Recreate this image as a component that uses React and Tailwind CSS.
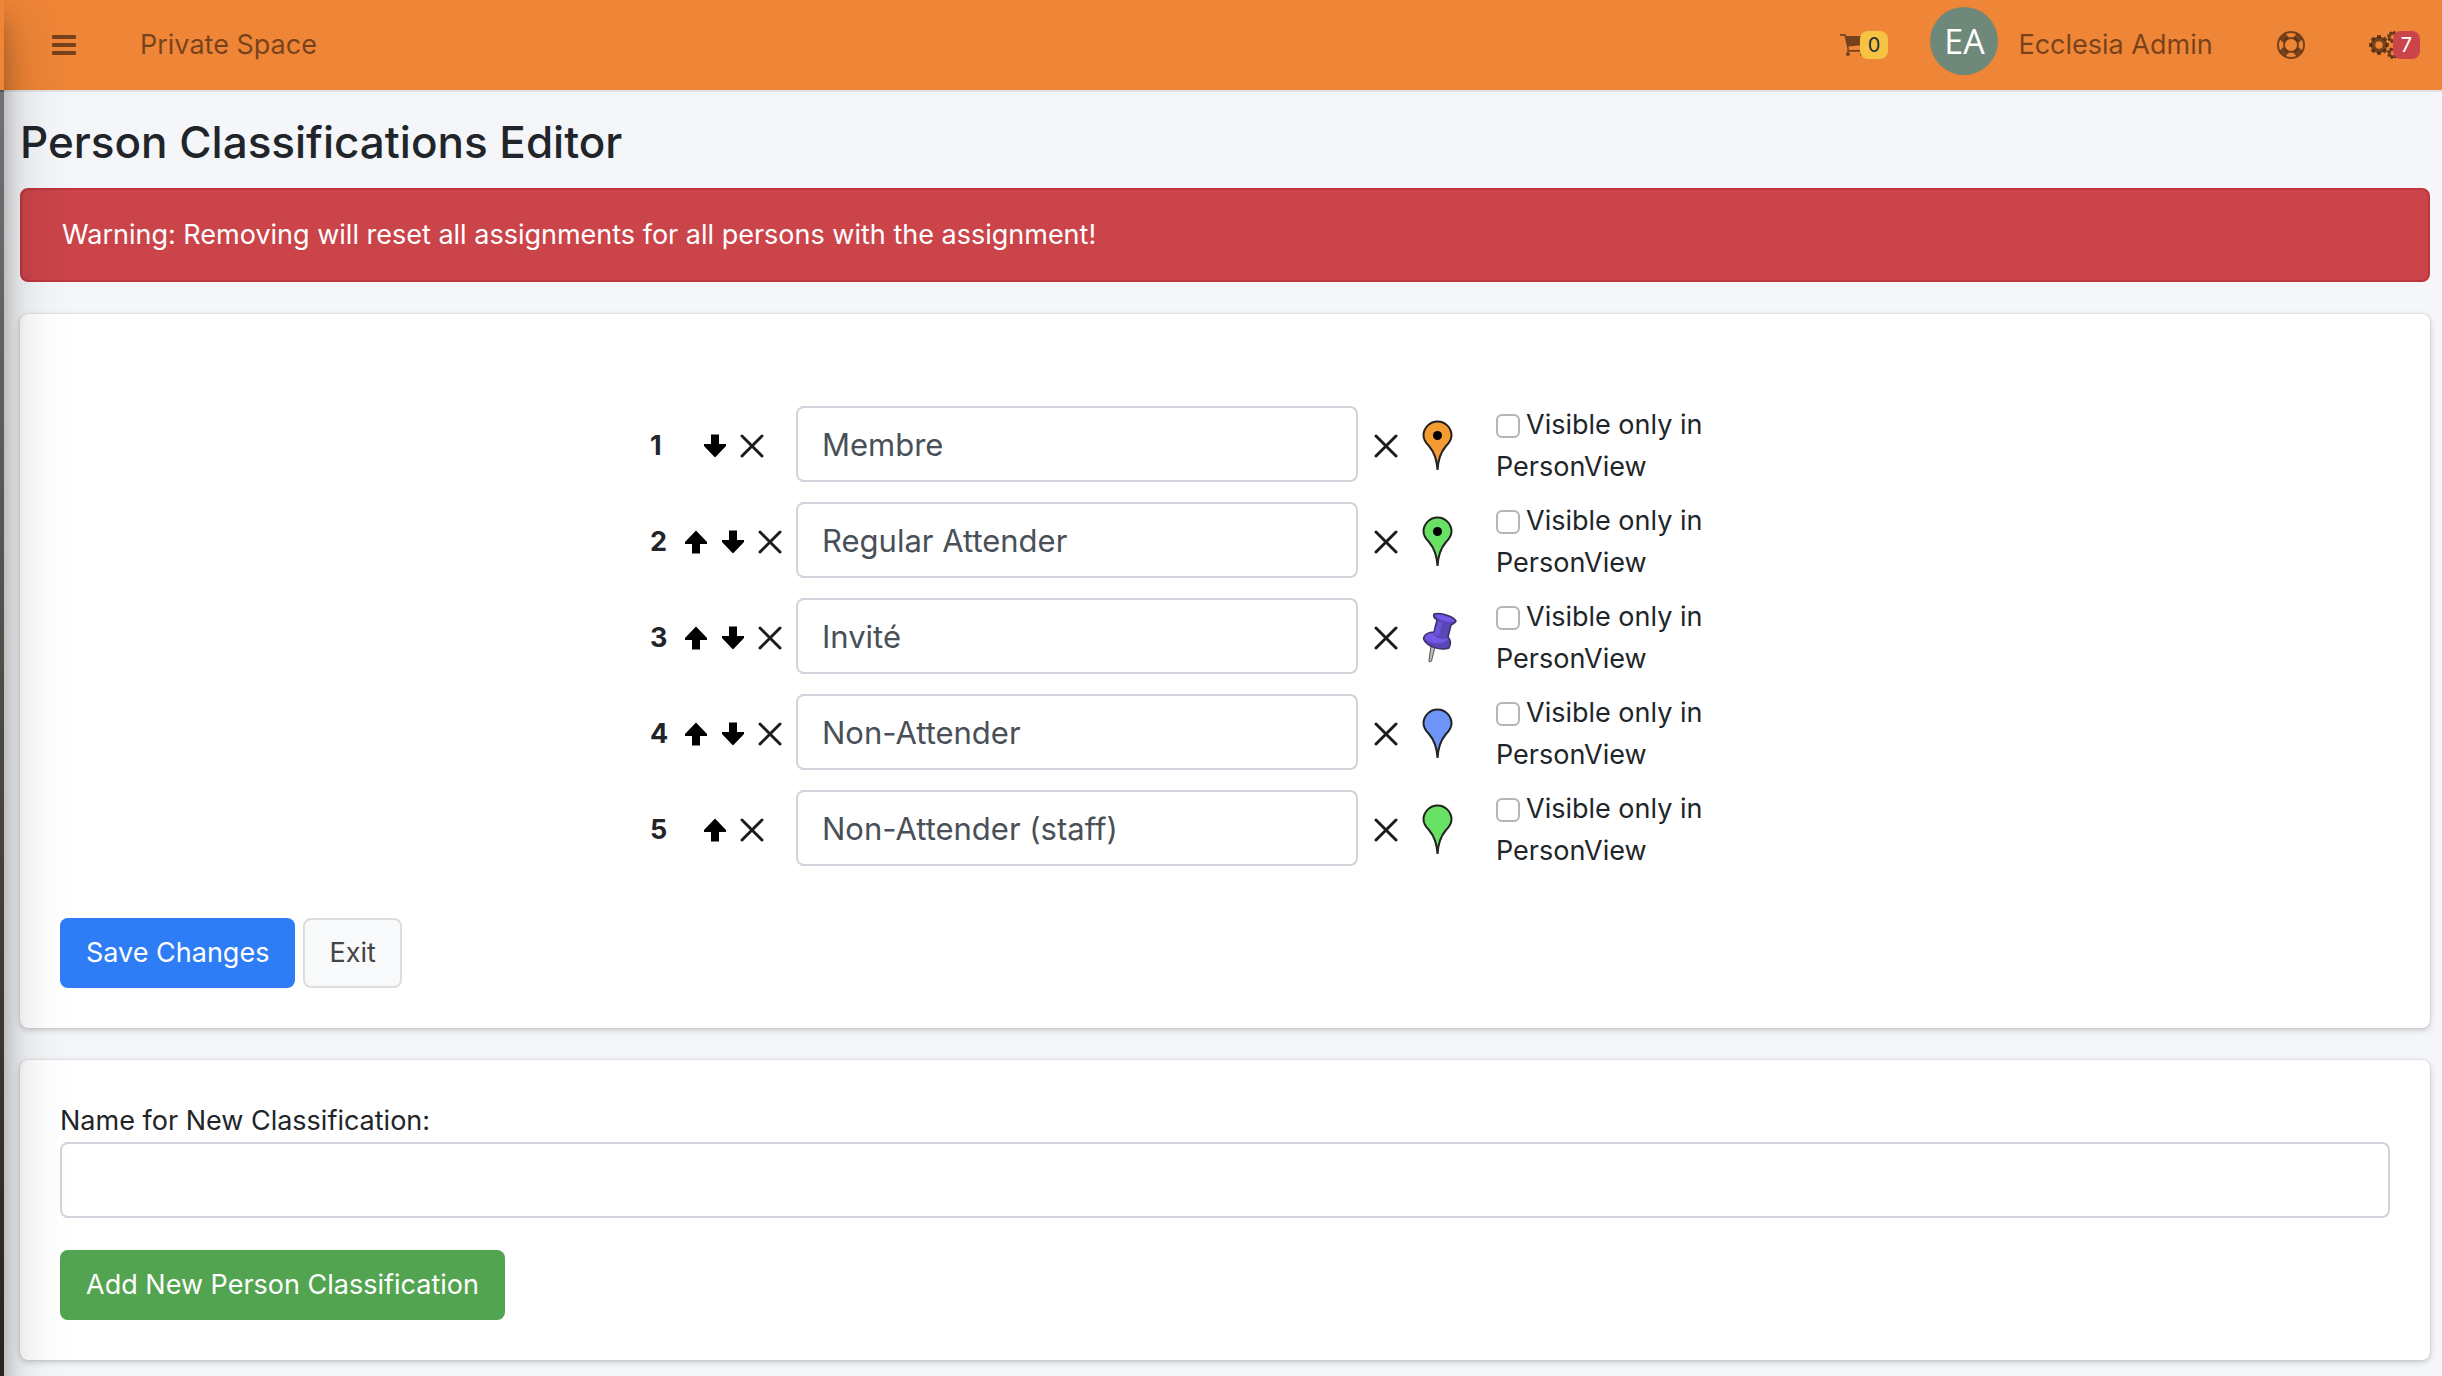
import { useState } from 'react';

const initialRows = [
  { id: 1, name: 'Membre', marker: 'orange', dot: true },
  { id: 2, name: 'Regular Attender', marker: 'green', dot: true },
  { id: 3, name: 'Invité', marker: 'pushpin' },
  { id: 4, name: 'Non-Attender', marker: 'blue' },
  { id: 5, name: 'Non-Attender (staff)', marker: 'green' }
];

const markerColors = { orange: '#f59b34', green: '#68e264', blue: '#6d95f7' };

function BarsIcon() {
  return (
    <svg viewBox="0 0 24 20" fill="currentColor" className="w-6 h-5">
      <rect width="24" height="4" rx="1" />
      <rect y="8" width="24" height="4" rx="1" />
      <rect y="16" width="24" height="4" rx="1" />
    </svg>
  );
}

function CartIcon() {
  return (
    <svg viewBox="0 0 28 22" fill="currentColor" className="w-7 h-[22px]">
      <path d="M0 0 H5.500 L6.200 2 H27 V10.500 L8.500 12.500 L9 16 H25 V17.800 H7 L7.500 15 L4.500 1.800 H0 Z" />
      <circle cx="8" cy="20" r="2" />
      <circle cx="22" cy="20" r="2" />
    </svg>
  );
}

function LifeRingIcon() {
  return (
    <svg viewBox="0 0 28 28" fill="none" stroke="currentColor" className="w-7 h-7">
      <circle cx="14" cy="14" r="13" strokeWidth="2" />
      <circle cx="14" cy="14" r="7" strokeWidth="2" />
      <path d="M5.500 5.500 L9 9 M22.500 5.500 L19 9 M5.500 22.500 L9 19 M22.500 22.500 L19 19" strokeWidth="8" />
    </svg>
  );
}

function Gear({ x, y, scale, turn }) {
  return (
    <g transform={`translate(${x} ${y}) rotate(${turn}) scale(${scale})`}>
      <circle r="6" strokeWidth="4.500" />
      {[0, 45, 90, 135].map(a => (
        <path key={a} d="M-10 0 H-7 M7 0 H10" strokeWidth="4" transform={`rotate(${a})`} />
      ))}
    </g>
  );
}

function GearsIcon() {
  return (
    <svg viewBox="0 0 32 28" fill="none" stroke="currentColor" className="w-8 h-7">
      <Gear x={10} y={14} scale={1} turn={0} />
      <Gear x={24} y={6} scale={0.6} turn={15} />
      <Gear x={24} y={22} scale={0.6} turn={15} />
    </svg>
  );
}

function ArrowIcon({ down }) {
  return (
    <svg viewBox="0 0 24 24" className={down ? 'w-6 h-6 rotate-180' : 'w-6 h-6'}>
      <path d="M12 0.5 L23 12 V14 H16 V23.5 H8 V14 H1 V12 Z" fill="#000" />
    </svg>
  );
}

function CrossIcon() {
  return (
    <svg viewBox="0 0 24 24" className="w-6 h-6">
      <path d="M2 2 L22 22 M22 2 L2 22" stroke="#1c1c1c" strokeWidth="3" strokeLinecap="round" fill="none" />
    </svg>
  );
}

function MarkerIcon({ marker, dot }) {
  if (marker === 'pushpin') {
    return (
      <svg viewBox="0 0 36 52" className="w-9 h-[52px]">
        <path d="M9 34 L13 35 L9.500 49 L7.500 50 L7 48 Z" fill="#bbb" stroke="#555" />
        <path d="M12 2 C18 0.500 31 4 34 9 C33 12 30 12 29 13 L26 25 C29 28 29 32 27 36 C19 39 5 35 1.500 27 C2 22 7 20 12 20 L15 8 C12 6 11 4 12 2 Z" fill="#5b46b8" stroke="#3a3160" strokeWidth="1.500" />
        <path d="M13 3 C19 2 29 5 33 9 C27 11 17 9 13 3 Z M2.500 26 C4 22 8 21 11 21 C14 27 21 28 26 26 C24 33 8 33 2.500 26 Z" fill="#7458e8" />
        <path d="M16 10 L20 11 L17 24 L12 22 Z" fill="#6c52dc" />
      </svg>
    );
  }
  return (
    <svg viewBox="0 0 32 52" className="w-8 h-[52px]">
      <path
        d="M15.500 50 C15 40 13 33 7 26 C3 22 1.500 19 1.500 15.500 A14 14 0 0 1 29.500 15.500 C29.500 19 28 22 24 26 C18 33 16 40 15.500 50 Z"
        fill={markerColors[marker]}
        stroke="#222"
        strokeWidth="2"
      />
      {dot && <circle cx="15.500" cy="15.500" r="4.500" fill="#000" />}
    </svg>
  );
}

function Navbar() {
  return (
    <nav className="flex items-center justify-between h-[92px] bg-[#ee8537] border-b-2 border-[#dee2e6] text-black/50">
      <div className="flex items-center gap-16 pl-[52px]">
        <button type="button" aria-label="Toggle menu"><BarsIcon /></button>
        <a href="#private">Private Space</a>
      </div>
      <div className="flex items-center pr-[22px]">
        <a href="#cart" aria-label="Cart" className="flex items-center mr-[42px]">
          <CartIcon />
          <span className="-ml-2 px-2 h-7 rounded-lg bg-[#f6c343] text-[#1f2d3d] text-[20px] leading-7">0</span>
        </a>
        <a href="#profile" className="flex items-center gap-5 mr-16">
          <span className="flex items-center justify-center w-[68px] h-[68px] mb-2 rounded-full bg-[#6e8879] text-white text-[34px] font-['Open_Sans',sans-serif]">EA</span>
          Ecclesia Admin
        </a>
        <a href="#help" aria-label="Help" className="mr-16"><LifeRingIcon /></a>
        <a href="#settings" aria-label="Settings" className="flex items-center">
          <GearsIcon />
          <span className="relative -ml-2 px-2 h-7 rounded-lg bg-[#cb444a] text-white text-[20px] leading-7">7</span>
        </a>
      </div>
    </nav>
  );
}

export default function App() {
  const [rows, setRows] = useState(initialRows);
  const [newName, setNewName] = useState('');

  const rename = (id, name) => setRows(rows.map(r => (r.id === id ? { ...r, name } : r)));
  const remove = (id) => setRows(rows.filter(r => r.id !== id));
  const move = (index, step) => {
    const next = [...rows];
    [next[index], next[index + step]] = [next[index + step], next[index]];
    setRows(next);
  };
  const addRow = (e) => {
    e.preventDefault();
    if (!newName) return;
    setRows([...rows, { id: Date.now(), name: newName, marker: 'green' }]);
    setNewName('');
  };

  return (
    <div className="relative min-h-screen overflow-hidden bg-[#f4f6f9] text-[#212529] font-[Inter,sans-serif] text-[27px] leading-[42px]">
      <Navbar />
      <main className="pl-5 pr-3">
        <h1 className="pt-5 pb-4 text-[44px] leading-[60px] font-medium">Person Classifications Editor</h1>
        <div role="alert" className="px-10 py-6 mb-8 rounded-lg border-2 border-[#bd363e] bg-[#cb444a] text-white">
          Warning: Removing will reset all assignments for all persons with the assignment!
        </div>

        <section className="p-10 mb-8 rounded-lg bg-white shadow-[0_0_2px_rgba(0,0,0,0.13),0_2px_6px_rgba(0,0,0,0.2)]">
          <table className="mx-auto mt-11">
            <tbody>
              {rows.map((row, i) => (
                <tr key={row.id} className="h-24">
                  <td className="w-7 font-bold">{i + 1}</td>
                  <td className="w-[110px]">
                    <div className="flex items-center justify-center gap-[13px]">
                      {i > 0 && <button type="button" aria-label="Move up" onClick={() => move(i, -1)}><ArrowIcon /></button>}
                      {i < rows.length - 1 && <button type="button" aria-label="Move down" onClick={() => move(i, 1)}><ArrowIcon down /></button>}
                      <button type="button" aria-label="Delete" onClick={() => remove(row.id)}><CrossIcon /></button>
                    </div>
                  </td>
                  <td className="pl-2 pb-1">
                    <input
                      type="text"
                      aria-label={`Classification ${i + 1}`}
                      value={row.name}
                      onChange={(e) => rename(row.id, e.target.value)}
                      className="block w-[562px] h-[76px] px-6 border-2 border-[#ced4da] rounded-lg text-[31px] text-[#495057]"
                    />
                  </td>
                  <td className="pl-4">
                    <div className="flex items-center gap-6">
                      <button type="button" aria-label="Remove icon"><CrossIcon /></button>
                      <MarkerIcon marker={row.marker} dot={row.dot} />
                    </div>
                  </td>
                  <td className="pl-[38px] w-[342px]">
                    <label>
                      <input type="checkbox" className="appearance-none w-6 h-6 mr-[6px] rounded-md border-2 border-[#b5b5b5] bg-white align-[-4px] checked:bg-blue-500" />
                      Visible only in PersonView
                    </label>
                  </td>
                </tr>
              ))}
            </tbody>
          </table>
          <div className="flex gap-2 mt-10">
            <button type="button" className="h-[70px] px-[26px] rounded-lg bg-[#2e7cf6] text-white">Save Changes</button>
            <button type="button" className="h-[70px] px-6 rounded-lg border-2 border-[#ddd] bg-[#f8f9fa] text-[#444]">Exit</button>
          </div>
        </section>

        <form onSubmit={addRow} className="p-10 mb-4 rounded-lg bg-white shadow-[0_0_2px_rgba(0,0,0,0.13),0_2px_6px_rgba(0,0,0,0.2)]">
          <label htmlFor="new-name" className="block">Name for New Classification:</label>
          <input
            id="new-name"
            type="text"
            value={newName}
            onChange={(e) => setNewName(e.target.value)}
            className="block w-full h-[76px] px-6 mb-8 border-2 border-[#ced4da] rounded-lg text-[31px] text-[#495057]"
          />
          <button type="submit" className="h-[70px] px-[26px] rounded-lg bg-[#52a450] text-white">Add New Person Classification</button>
        </form>
      </main>

      {/* collapsed sidebar: only its edge shows, its shadow falls over the page */}
      <aside className="absolute -left-[500px] top-0 bottom-0 w-[504px] pointer-events-none bg-linear-to-b from-[#777] to-[#2a2320] shadow-[0_28px_56px_rgba(0,0,0,0.25),0_20px_20px_rgba(0,0,0,0.22)]">
        <div className="h-[92px] bg-[#ee8537] border-b-2 border-[#4b545c]" />
      </aside>
    </div>
  );
}
